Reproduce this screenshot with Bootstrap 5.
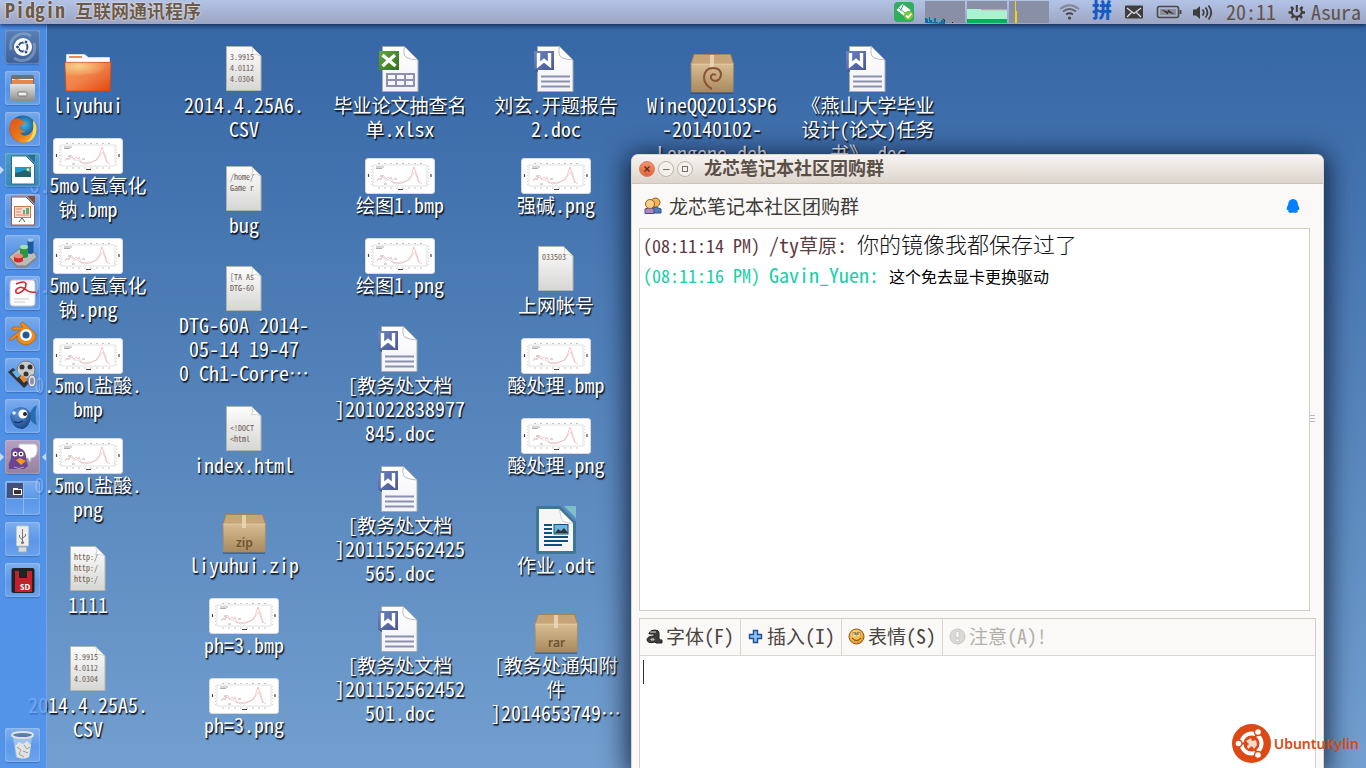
<!DOCTYPE html>
<html lang="zh-CN">
<head>
<meta charset="utf-8">
<meta name="viewport" content="width=device-width, initial-scale=1">
<title>Pidgin 互联网通讯程序</title>
<link href="https://cdn.jsdelivr.net/npm/bootstrap@5.3.0/dist/css/bootstrap.min.css" rel="stylesheet">
<style>
body{font-family:"Noto Sans CJK SC","Liberation Mono",monospace;font-feature-settings:"hwid";font-size:19px;line-height:24px;background:#3465a4;color:#3c3b37}
button,textarea{font-feature-settings:inherit}
.screen{background:linear-gradient(#3465a4,#729fcf);isolation:isolate}
.lat{font-size:20px}
/* top panel */
.panel{height:24px;background:linear-gradient(#b3c3e6,#9da5c2);box-shadow:0 1px 5px rgba(0,10,40,.8);color:#6b5a4c;text-shadow:0 0 2px #f4ece4,0 0 1px #fff;z-index:5;padding:0 5px}
.panel h1{font-size:18px;line-height:20px}
.panel button{color:#5f5348;line-height:22px;font-size:20px}
.panel svg text{text-shadow:none}
.tray{height:24px}
/* launcher */
.launcher{width:47px;background:linear-gradient(rgba(80,148,242,.8),rgba(76,146,240,.8));border-right:1px solid rgba(150,190,245,.45);padding:6px 5px;gap:7px;z-index:3}
.launcher button{width:35px;height:34px;border-radius:3px;background:linear-gradient(rgba(255,255,255,.26),rgba(255,255,255,.05) 55%,rgba(255,255,255,.14));box-shadow:inset 0 0 2px rgba(225,238,255,.8),0 1px 1px rgba(20,60,130,.35)}
.launcher .t-home{background:linear-gradient(#5a7fb4,#3d6098)}
.launcher .t-doc{background:linear-gradient(#4b9cc4,#3a87b8)}
.launcher .t-pidgin{background:linear-gradient(#b6a0c0,#94819f)}
.pip::before,.pip-r::after{content:"";position:absolute;top:13px;border:4px solid transparent}
.pip::before{left:-5px;border-left-color:#c4dcf8;border-right:0}
.pip-r::after{right:-6px;border-right-color:#c4dcf8;border-left:0}
/* desktop */
.desk{display:grid;grid-template-columns:repeat(6,156px);grid-auto-rows:20px;padding:22px 0 0 10px;left:0;right:0;top:24px;z-index:1}
.ico{color:#fff;text-shadow:1px 1px 1px #0a1830,1px 2px 1px rgba(0,0,0,.6);text-align:center;text-decoration:none;white-space:nowrap;line-height:24px}
.ico:hover{color:#fff}
.ico svg{display:block;margin:0 auto -1px}
.ico svg text{text-shadow:none}
.c1{grid-column:1}.c2{grid-column:2}.c3{grid-column:3}.c4{grid-column:4}.c5{grid-column:5}.c6{grid-column:6}
.r1{grid-row:1}.r5{grid-row:5}.r6{grid-row:6}.r7{grid-row:7}.r10{grid-row:10}.r11{grid-row:11}.r12{grid-row:12}.r15{grid-row:15}.r19{grid-row:19}.r20{grid-row:20}.r22{grid-row:22}.r24{grid-row:24}.r26{grid-row:26}.r28{grid-row:28}.r29{grid-row:29}.r31{grid-row:31}.r32{grid-row:32}
/* chat window */
.win{left:631px;right:42px;top:154px;bottom:0;background:#faf9f7;border:1px solid #d9d5cf;border-bottom:0;border-radius:7px 7px 0 0;box-shadow:0 4px 26px 4px rgba(0,8,30,.75);z-index:2}
.wtitle{height:29px;background:linear-gradient(#f7f4f1,#ddd5cc);border-bottom:1px solid #cdc5bb;border-radius:7px 7px 0 0;padding:0 7px;gap:3px;color:#5b5048}
.wtitle h2{font-size:18px;line-height:24px;margin:0 0 4px 8px}
.wtitle button{width:16px;height:16px}
.whead{height:44px;padding:0 22px 0 12px;gap:7px}
.whead h3{font-size:19px;line-height:24px}
.log{border:1px solid #d2cdc3;background:#fff;margin:0 13px 0 7px;padding:0 3px;height:383px}
.log p{line-height:29px;white-space:pre}
.at{font-size:18px}
.who1{color:#5c3a3f}.who2{color:#17cfa6}
.say1{font-size:22px;color:#111;font-weight:300}.say2{font-size:16px;color:#000}
.compose{border:1px solid #d2cdc3;border-bottom:0;margin:7px 7px 0;background:#fff}
.tools{background:#faf9f7;border-bottom:1px solid #dcd8d1;height:37px}
.tools button{font-size:19px;line-height:24px;color:#4a4540;height:36px;width:101px;padding:0 0 2px 6px;gap:3px;border:0;border-right:1px solid #dcd8d1;white-space:nowrap}
.tools button:disabled{color:#b3afaa;width:120px;border:0;font-family:"Noto Sans CJK JP","Noto Sans CJK SC",monospace}
.tools svg{flex:none}
.compose textarea{resize:none;outline:0;font-size:19px}
.cursor{left:3px;top:41px;width:1px;height:24px;background:#333}
.grip{right:8px;top:260px;width:5px;height:7px;border-top:1px solid #bbb;border-bottom:1px solid #bbb}
.grip::before{content:"";position:absolute;left:0;right:0;top:2px;border-top:1px solid #bbb}
.brand{right:7px;bottom:5px;gap:3px;color:#dd4814;font:600 14px/20px "Noto Sans","Open Sans",sans-serif;font-feature-settings:normal;z-index:4}
</style>
</head>
<body>
<svg width="0" height="0" class="position-absolute" aria-hidden="true">
<defs>
<linearGradient id="gPage" x2="0" y2="1"><stop stop-color="#fdfdfd"/><stop offset="1" stop-color="#d6d6d4"/></linearGradient>
<linearGradient id="gDoc" x2="0" y2="1"><stop stop-color="#fff"/><stop offset="1" stop-color="#f2f2f8"/></linearGradient>
<linearGradient id="gW" x2="1" y2="1"><stop stop-color="#6d84c4"/><stop offset="1" stop-color="#475792"/></linearGradient>
<linearGradient id="gX" x2="1" y2="1"><stop stop-color="#63a545"/><stop offset="1" stop-color="#33701c"/></linearGradient>
<linearGradient id="gBox" x2="0" y2="1"><stop stop-color="#d9bd93"/><stop offset="1" stop-color="#a98a5e"/></linearGradient>
<linearGradient id="gFold" x2="1" y2="1"><stop stop-color="#f39a55"/><stop offset=".5" stop-color="#f08148"/><stop offset="1" stop-color="#e4450f"/></linearGradient>
<radialGradient id="gGlow" cx=".3" cy=".2" r=".6"><stop stop-color="#f8d08c"/><stop offset="1" stop-color="#f8d08c" stop-opacity="0"/></radialGradient>
<radialGradient id="gFish" cx=".4" cy=".3" r=".8"><stop stop-color="#5d97da"/><stop offset="1" stop-color="#123e7d"/></radialGradient>
<radialGradient id="gFox" cx=".55" cy=".35" r=".6"><stop stop-color="#39b5e6"/><stop offset="1" stop-color="#12306e"/></radialGradient>
<linearGradient id="gFire" x2="1" y2="1"><stop stop-color="#d9541c"/><stop offset=".6" stop-color="#ee7a1b"/><stop offset="1" stop-color="#fbd33a"/></linearGradient>
<linearGradient id="gGrey" x2="0" y2="1"><stop stop-color="#e4e4e2"/><stop offset="1" stop-color="#8d8d8a"/></linearGradient>
<radialGradient id="gSmile" cx=".4" cy=".3" r=".8"><stop stop-color="#ffe07a"/><stop offset="1" stop-color="#e08a1c"/></radialGradient>
<linearGradient id="gClose" x2="0" y2="1"><stop stop-color="#f39170"/><stop offset="1" stop-color="#e2603a"/></linearGradient>
<symbol id="page" viewBox="0 0 72 48"><path d="M18.500.500h25l9.500 9.500v34.500h-34.500z" fill="url(#gPage)" stroke="#b4b4ae"/><path d="M43.500 .5q3 5 0 8.500q5-2 9.500 1z" fill="#fff" stroke="#c4c4be" stroke-width=".7"/></symbol>
<symbol id="plot" viewBox="0 0 72 48"><rect x="1.500" y="12.500" width="69" height="35" rx="2.500" fill="#fff" stroke="#d7dbe0"/><rect x="9" y="19" width="54" height="21" fill="none" stroke="#ccc" stroke-width=".6"/><path d="M14 17.500h46M14 42h46" stroke="#c4c4c4" stroke-dasharray="2 4"/><path d="M7.500 20v20M64.500 20v20" stroke="#ccc" stroke-width=".8" stroke-dasharray="1 2"/><path d="M4.500 28v3M67 28v3M34 43.500h5" stroke="#444" stroke-width="1.200"/><path d="M12 21h8M12 22.500h6M16 30h3M20 38h3M30 33h3" stroke="#999" stroke-width=".8"/><path d="M13 35l2-3 2 2 2-5 3 4 2-2 2 2 1-2 2 5 3 2 6-1 6-3 3-4 3-9 3 8 2 7 3 2" fill="none" stroke="#f0b9be" stroke-width=".8"/><path d="M13 34l3-1 3-2 3 3 4 0 3 3 10-1 6-2 4-6 2-2 2 6 2 5" fill="none" stroke="#d5bcc0" stroke-width=".6"/></symbol>
<symbol id="word" viewBox="0 0 72 48"><path d="M17.500.500h22l13.500 13.500v31.500h-35.500z" fill="url(#gDoc)" stroke="#a9aab0"/><path d="M39.500.500q-2 8 2 11q4 2 11.500 2.500z" fill="#fff" stroke="#a5a7b2" stroke-width=".8"/><path d="M21 30.500h29M21 35.500h29M21 40.500h29" stroke="#8c92ad" stroke-width="2"/><path d="M15 24h3v2z" fill="#3150a8"/><rect x="14" y="5" width="20" height="19" fill="url(#gW)"/><path d="M18.500 7v12l5.500-4.500 5.500 4.500v-12" fill="none" stroke="#fff" stroke-width="3.400"/></symbol>
<symbol id="box" viewBox="0 0 72 48"><path d="M15 46h42v2h-42z" fill="#1c3c68" opacity=".5"/><path d="M18 8.500h36.500l3 9.500h-42.500z" fill="#c7a578" stroke="#a4845a"/><path d="M15 17.500h42.500l-.5 28.500h-41.500z" fill="url(#gBox)" stroke="#a98b60" stroke-width=".8"/><path d="M15.500 18h41.500" stroke="#ead2ac"/><path d="M34 9h4v13h-4z" fill="#ead8b8" opacity=".85"/></symbol>
</defs>
</svg>
<div class="screen position-relative vh-100 overflow-hidden d-flex flex-column">
<header class="panel d-flex align-items-center justify-content-between position-relative flex-shrink-0">
  <h1 class="mb-1 fw-bold"><span class="lat">Pidgin </span>互联网通讯程序</h1>
  <div class="tray d-flex align-items-center">
    <svg width="332" height="24" viewBox="0 0 332 24" aria-hidden="true">
      <rect x="0" y="2" width="20" height="20" rx="4" fill="#2fae5c"/><path d="M2.500 10l6-6 8 6-5 7z" fill="#fff"/><path d="M5 8l7 6M9.500 4.500l-3 6" stroke="#2fae5c" stroke-width="1"/><circle cx="14.500" cy="15.500" r="4.500" fill="#7cc23a"/><path d="M12 15.500l2 2 3.500-4" stroke="#fff" stroke-width="1.800" fill="none"/>
      <g fill="#898fa4"><rect x="31" y="1" width="40" height="22"/><rect x="73" y="1" width="40" height="22"/><rect x="115" y="1" width="40" height="22"/></g>
      <path d="M31 23v-5h2v1h1v3h1v-5h1v3h2v2h2v-4h2v4h2v1h1v-1h2v-2h2v1h2v3z" fill="#0c6fae"/><path d="M48 18l3 2v2zM58 22h1v1h-1z" fill="#10202e"/>
      <path d="M73 9h14v1h26v9h-40z" fill="#a9f3d2"/><path d="M87 10h26" stroke="#d4bfc0"/><path d="M73 19h40v4h-40z" fill="#04b058"/><path d="M121 1h1v10h1v12h-2z" fill="#f5d400"/>
      <g fill="none" stroke="#4b4845" stroke-width="1.800"><path d="M169 11.500q6.500-5 13 0" opacity=".75"/><path d="M166 9q9.500-7.500 19 0" opacity=".45"/><path d="M172 14.500q3.500-2.500 7 0"/></g><circle cx="175.500" cy="18" r="1.600" fill="#4b4845"/>
      <text x="198" y="18" font-size="20" font-weight="900" fill="#155bc4">拼</text>
      <rect x="231" y="5.500" width="18" height="13" rx="1" fill="#3f3d3b"/><path d="M233 8l7 5.500 7-5.500M233 17l4.500-4.500M247 17l-4.500-4.500" fill="none" stroke="#dfe3ee" stroke-width="1.200"/>
      <rect x="263.500" y="6.500" width="21" height="11" rx="2" fill="none" stroke="#4b4845" stroke-width="1.600"/><rect x="266" y="9" width="16" height="6" fill="#8d8f9a"/><path d="M286.500 10v4" stroke="#4b4845" stroke-width="2"/><path d="M267 9.500l7 2 0-2 7 5-7-2v2z" fill="#3a3836"/>
      <path d="M299 9.500h3l4-3.500v13l-4-3.500h-3z" fill="#3f3d3b"/><g fill="none" stroke="#3f3d3b" stroke-width="1.700"><path d="M308.500 9.500q2.500 3 0 6"/><path d="M311.500 7.500q4 5 0 10"/><path d="M314.500 5.500q5.500 7 0 14"/></g>
    </svg>
    <button class="btn btn-link border-0 p-0 text-decoration-none">20:11</button>
    <button class="btn btn-link border-0 p-0 text-decoration-none d-flex align-items-center ms-2"><svg width="27" height="20" viewBox="0 0 27 20" aria-hidden="true"><g stroke="#3f3d3b" fill="none"><path d="M9.500 6a5 5 0 1 0 6.500 0M12.800 3v7" stroke-width="2"/><path d="M4.500 10.500h3.500M17.500 10.500h3.500M7 4.800l2 2M18.600 4.800l-2 2M7.500 15.800l2-2M18 15.800l-2-2M12.800 15v3.500" stroke-width="2.400"/></g></svg>Asura</button>
  </div>
</header>
<nav class="launcher d-flex flex-column align-items-start flex-grow-1 position-relative" aria-label="启动器">
  <button class="btn border-0 p-0 d-flex t-home" aria-label="Dash"><svg width="35" height="34"><path d="M6 20a13 13 0 0 1 20-14M29 13a13 13 0 0 1-20 15" fill="none" stroke="#a9bfda" stroke-width="3" opacity=".45"/><circle cx="18" cy="17" r="9" fill="#fff"/><circle cx="18" cy="17" r="4.500" fill="none" stroke="#2c4f86" stroke-width="2"/><g fill="#2c4f86" stroke="#fff"><circle cx="12.500" cy="17" r="2"/><circle cx="21" cy="12" r="2"/><circle cx="21" cy="22" r="2"/></g></svg></button>
  <button class="btn border-0 p-0 d-flex" aria-label="文件"><svg width="35" height="34"><path d="M6 6q0-2 2-2h19q2 0 2 2v8h-23z" fill="#71716e"/><path d="M7 8h21v6h-21z" fill="#f5efe4"/><path d="M7 9l5-1 4 1h12v5h-21z" fill="#e88747"/><rect x="5" y="13" width="25" height="17" rx="1" fill="url(#gGrey)"/><rect x="13" y="21" width="9" height="4" rx="1" fill="#eee" stroke="#777"/></svg></button>
  <button class="btn border-0 p-0 d-flex" aria-label="Firefox"><svg width="35" height="34"><circle cx="18" cy="17" r="13.500" fill="url(#gFox)"/><path d="M6 9q-4 9 1 16 7 8 16 5 9-4 8.500-15-1-4-3-6 1 8-2 11-4 5-9 3l-3-3q3 2 6-1-4 0-6-3 0-3 3-3l4-3q-4 0-5-2l-2-1q-3-2-8.500 2z" fill="url(#gFire)"/><path d="M28 8q5 6 3 13-3 8-9 9 8-6 6-22z" fill="#fbdc4c"/></svg></button>
  <button class="btn border-0 p-0 d-flex t-doc position-relative pip" aria-label="Writer"><svg width="35" height="34"><path d="M22 2h8v8z" fill="#2a6f92"/><path d="M6.500 3h14.500l8.500 8.500v19.500h-23z" fill="#fff" stroke="#2e6d8c"/><rect x="10" y="14" width="16" height="10" fill="#1d9ad6"/><path d="M10 24v-4l5-1 5-2 6 3v4z" fill="#28606b"/><circle cx="23" cy="16.500" r="1.500" fill="#fbd94b"/></svg></button>
  <button class="btn border-0 p-0 d-flex" aria-label="Impress"><svg width="35" height="34"><path d="M22 2h8v8z" fill="#8c4a30"/><path d="M6.500 3h14.500l8.500 8.500v19.500h-23z" fill="#fff" stroke="#9a5a42"/><rect x="9.500" y="12.500" width="16" height="11" fill="#f7ded2" stroke="#d4704c"/><path d="M11 15h6M11 18h5M11 21h13" stroke="#d98564"/><path d="M18 20v-4h2v4M21 20v-6h3v6" fill="#65a67a"/><path d="M14 28l3-4 3 4" stroke="#555" fill="none"/></svg></button>
  <button class="btn border-0 p-0 d-flex" aria-label="统计"><svg width="35" height="34"><path d="M4 22l10-8h13l5 8-11 9h-9z" fill="#b9bcbb" stroke="#74797c"/><path d="M4 22l8 9h9l11-9v2l-11 9h-9l-8-9z" fill="#85898b"/><path d="M22.500 5v13q3 2 6 0v-13z" fill="#1c5a9e"/><ellipse cx="25.500" cy="5" rx="3" ry="1.800" fill="#9cc6ee"/><path d="M15 12v10q4 2 8 0v-10z" fill="#2b9440"/><ellipse cx="19" cy="12" rx="4" ry="2.200" fill="#a5dfae"/><path d="M9 21v5q4.500 3 9 0v-5z" fill="#d42a2a"/><ellipse cx="13.500" cy="21" rx="4.500" ry="2.200" fill="#f58a80"/></svg></button>
  <button class="btn border-0 p-0 d-flex" aria-label="文档"><svg width="35" height="34"><rect x="5" y="4" width="25" height="26" rx="3" fill="#fbfbfb" stroke="#c6cad0"/><path d="M11 8q9-4 10 0 0 6-7 9-4 1-3-3 4-5 9-1 4 4 11 3" fill="none" stroke="#d9252c" stroke-width="1.600"/><path d="M9 23h15M9 26h11" stroke="#ccc"/></svg></button>
  <button class="btn border-0 p-0 d-flex" aria-label="Blender"><svg width="35" height="34"><path d="M4 22l12-9h-9q-1-3 2-3h9l-3-3q2-3 4-1l10 9q4 5 0 9-8 8-16 0-2-3-1-5l-5 4q-3 1-3-1z" fill="#f08a1c" stroke="#b35e08" stroke-width=".7"/><circle cx="21" cy="18" r="6" fill="#fff"/><circle cx="21" cy="18" r="3.500" fill="#1d5b9a"/></svg></button>
  <button class="btn border-0 p-0 d-flex" aria-label="视频编辑"><svg width="35" height="34"><circle cx="21" cy="12" r="9" fill="#c9cccb" stroke="#777"/><g fill="#333"><circle cx="17" cy="9" r="2.500"/><circle cx="25" cy="9" r="2.500"/><circle cx="21" cy="16" r="2.500"/></g><path d="M3 14l5-4 16 15-5 5z" fill="#2f3336"/><path d="M7 14l4-2 5 5-4 3z" fill="#5fb4ee"/><path d="M14 19l4-2 4 5-3 3z" fill="#e58b35"/><ellipse cx="27" cy="23" rx="4" ry="6" fill="#dfe2e8" stroke="#6a7080"/><ellipse cx="27" cy="23" rx="2" ry="3.500" fill="#8a93b0"/></svg></button>
  <button class="btn border-0 p-0 d-flex" aria-label="Bluefish"><svg width="35" height="34"><path d="M24 17q2-8 8-11-3 10 0 20-6-2-8-9z" fill="#2a6cae"/><path d="M5 18q2-10 11-10 9 1 10 10-1 9-8 12-10 1-13-12z" fill="url(#gFish)"/><circle cx="18" cy="15" r="4.500" fill="#fff"/><circle cx="20" cy="15" r="2" fill="#222"/><circle cx="9" cy="14" r="1.800" fill="#e8f0fa"/><path d="M9 23q5 2 9-1" stroke="#0b2a5a" fill="none"/></svg></button>
  <button class="btn border-0 p-0 d-flex t-pidgin position-relative pip pip-r" aria-label="Pidgin"><svg width="35" height="34"><path d="M14 4h16q3 1 2 8-1 6-6 6l-1 4-2-4h-9z" fill="#fff" stroke="#b9c2d6"/><path d="M6 12q1-5 8-4 6 1 7 8 0 5 2 10l-4 3h-15q-1-6 2-10z" fill="#6b4590"/><circle cx="10" cy="14" r="2.500" fill="#fff"/><circle cx="16" cy="14" r="2.500" fill="#fff"/><circle cx="10.500" cy="14" r="1"/><circle cx="16" cy="14" r="1"/><path d="M11 20l4-2 6 3-5 4z" fill="#f49b1e"/><path d="M9 27q5 3 10 0" stroke="#b69acb" fill="none"/></svg></button>
  <button class="btn border-0 p-0 d-flex" aria-label="工作区"><svg width="35" height="34"><rect x="2" y="2" width="16" height="15" fill="#45507c"/><rect x="8.500" y="8.500" width="8" height="5" fill="#333" stroke="#fff"/><path d="M8 8h5" stroke="#fff" stroke-width="2"/><path d="M18.500 2v31M2 17.500h31" stroke="#8fbaf0"/></svg></button>
  <button class="btn border-0 p-0 d-flex" aria-label="USB"><svg width="35" height="34"><rect x="11.500" y="4" width="12" height="20" rx="1" fill="#eceeef" stroke="#c3c6c9"/><rect x="13.500" y="25" width="8" height="5" fill="#d9dbdc" stroke="#a7a9ab"/><path d="M17.500 7v14M17.500 18l-3-3v-2M17.500 16l3-2v-2" stroke="#777" fill="none"/><circle cx="17.500" cy="20.500" r="1.500" fill="#777"/></svg></button>
  <button class="btn border-0 p-0 d-flex" aria-label="SD"><svg width="35" height="34"><rect x="6.500" y="5" width="23" height="25" rx="2" fill="#232323"/><path d="M10 8h17v21h-17z" fill="#c8202a"/><path d="M14 8h8v7h-8z" fill="#222"/><text x="15" y="27" font-family="Noto Sans" font-size="8" font-weight="700" fill="#fff">SD</text></svg></button>
  <button class="btn border-0 p-0 d-flex mt-auto" aria-label="回收站"><svg width="35" height="34"><path d="M8 9l3 20q6 3 13 0l3-20z" fill="#e6ecf0" opacity=".45"/><path d="M10 18l4-4 4 2 4-3 4 4-2 12q-6 3-12 0z" fill="#e2e2de"/><path d="M12 19l4 3-2 4 5 3M19 17l3 4 3-2M18 23l5 2" stroke="#9b9d9c" fill="none"/><ellipse cx="17.500" cy="7" rx="10.500" ry="3" fill="#587da8" stroke="#dfe2e2" stroke-width="2"/></svg></button>
</nav>
<main class="desk position-absolute">
  <a href="#" class="ico c1 r1"><svg width="72" height="48" viewBox="0 0 72 48"><path d="M14.500 16v-7.500h18l4 3h21v5z" fill="#fafafa" stroke="#d8d8d8"/><path d="M17 11h13" stroke="#ef8a55" stroke-width="2"/><path d="M13 16.500h46l-1 28.500h-44z" fill="url(#gFold)" stroke="#d4480f" stroke-width=".8"/><path d="M13 16.500h46l-1 10q-25 0-44 8z" fill="url(#gGlow)"/></svg><span class="lat">liyuhui</span></a>
  <a href="#" class="ico c1 r5"><svg width="72" height="48"><use href="#plot"/></svg><span class="lat">0.5mol</span>氢氧化<br>钠<span class="lat">.bmp</span></a>
  <a href="#" class="ico c1 r10"><svg width="72" height="48"><use href="#plot"/></svg><span class="lat">0.5mol</span>氢氧化<br>钠<span class="lat">.png</span></a>
  <a href="#" class="ico c1 r15"><svg width="72" height="48"><use href="#plot"/></svg><span class="lat">0.5mol</span>盐酸.<br><span class="lat">bmp</span></a>
  <a href="#" class="ico c1 r20"><svg width="72" height="48"><use href="#plot"/></svg><span class="lat">0.5mol</span>盐酸.<br><span class="lat">png</span></a>
  <a href="#" class="ico c1 r26"><svg width="72" height="48"><use href="#page"/><g fill="#6e5a44" font-size="8"><text x="22" y="14">http:/</text><text x="22" y="25">http:/</text><text x="22" y="36">http:/</text></g></svg><span class="lat">1111</span></a>
  <a href="#" class="ico c1 r31"><svg width="72" height="48"><use href="#page"/><g fill="#6e5a54" font-size="8"><text x="22" y="14">3.9915</text><text x="22" y="25">4.0112</text><text x="22" y="36">4.0304</text></g></svg><span class="lat">2014.4.25A5.<br>CSV</span></a>

  <a href="#" class="ico c2 r1"><svg width="72" height="48"><use href="#page"/><g fill="#6e5a54" font-size="8"><text x="22" y="14">3.9915</text><text x="22" y="25">4.0112</text><text x="22" y="36">4.0304</text></g></svg><span class="lat">2014.4.25A6.<br>CSV</span></a>
  <a href="#" class="ico c2 r7"><svg width="72" height="48"><use href="#page"/><g fill="#6e5a54" font-size="8"><text x="22" y="14">/home/</text><text x="22" y="25">Game r</text></g></svg><span class="lat">bug</span></a>
  <a href="#" class="ico c2 r12"><svg width="72" height="48"><use href="#page"/><g fill="#6e5a54" font-size="8"><text x="22" y="14">[TA As</text><text x="22" y="25">DTG-60</text></g></svg><span class="lat">DTG-60A 2014-<br>05-14 19-47<br>0 Ch1-Corre…</span></a>
  <a href="#" class="ico c2 r19"><svg width="72" height="48"><use href="#page"/><g fill="#6e5a54" font-size="8"><text x="22" y="25">&lt;!DOCT</text><text x="22" y="36">&lt;html</text></g></svg><span class="lat">index.html</span></a>
  <a href="#" class="ico c2 r24"><svg width="72" height="48"><use href="#box"/><text x="28" y="41" font-family="Noto Sans" font-weight="600" font-size="12" fill="#6d522f">zip</text></svg><span class="lat">liyuhui.zip</span></a>
  <a href="#" class="ico c2 r28"><svg width="72" height="48"><use href="#plot"/></svg><span class="lat">ph=3.bmp</span></a>
  <a href="#" class="ico c2 r32"><svg width="72" height="48"><use href="#plot"/></svg><span class="lat">ph=3.png</span></a>

  <a href="#" class="ico c3 r1"><svg width="72" height="48" viewBox="0 0 72 48"><path d="M18.500.500h22l13.500 13.500v31.500h-35.500z" fill="url(#gDoc)" stroke="#a9aab0"/><path d="M40.500.500q-2 8 2 11q4 2 11.500 2.500z" fill="#fff" stroke="#a5a7b2" stroke-width=".8"/><path d="M23 28h27v12h-27zM23 34h27M32 28v12M41 28v12" stroke="#8c92ad" stroke-width="2" fill="none"/><rect x="15" y="5" width="20" height="19" fill="url(#gX)"/><path d="M18.500 9l13 11M31 9l-12.500 11" stroke="#fff" stroke-width="3.400"/></svg>毕业论文抽查名<br>单<span class="lat">.xlsx</span></a>
  <a href="#" class="ico c3 r6"><svg width="72" height="48"><use href="#plot"/></svg>绘图<span class="lat">1.bmp</span></a>
  <a href="#" class="ico c3 r10"><svg width="72" height="48"><use href="#plot"/></svg>绘图<span class="lat">1.png</span></a>
  <a href="#" class="ico c3 r15"><svg width="72" height="48"><use href="#word"/></svg>[教务处文档<br><span class="lat">]201022838977<br>845.doc</span></a>
  <a href="#" class="ico c3 r22"><svg width="72" height="48"><use href="#word"/></svg>[教务处文档<br><span class="lat">]201152562425<br>565.doc</span></a>
  <a href="#" class="ico c3 r29"><svg width="72" height="48"><use href="#word"/></svg>[教务处文档<br><span class="lat">]201152562452<br>501.doc</span></a>

  <a href="#" class="ico c4 r1"><svg width="72" height="48"><use href="#word"/></svg>刘玄.开题报告<br><span class="lat">2.doc</span></a>
  <a href="#" class="ico c4 r6"><svg width="72" height="48"><use href="#plot"/></svg>强碱<span class="lat">.png</span></a>
  <a href="#" class="ico c4 r11"><svg width="72" height="48"><use href="#page"/><text x="22" y="14" fill="#6e5a44" font-size="8">033503</text></svg>上网帐号</a>
  <a href="#" class="ico c4 r15"><svg width="72" height="48"><use href="#plot"/></svg>酸处理<span class="lat">.bmp</span></a>
  <a href="#" class="ico c4 r19"><svg width="72" height="48"><use href="#plot"/></svg>酸处理<span class="lat">.png</span></a>
  <a href="#" class="ico c4 r24"><svg width="72" height="48" viewBox="0 0 72 48"><path d="M18 0h22l16 16v30q0 2-2 2h-36q-2 0-2-2v-44q0-2 2-2z" fill="#3c7796"/><path d="M44 0h12v12z" fill="#7cc0cc"/><path d="M19 3h20l14 14v28h-34z" fill="#f6f6f6"/><path d="M39 3v0l14 14q-9 0-11-3z" fill="#fff" stroke="#bbb" stroke-width=".7"/><path d="M24 19h8M24 23h8M24 27h8M24 31h24M24 35h24M24 39h18" stroke="#0e4f7c" stroke-width="1.800"/><rect x="34" y="18.500" width="14" height="9.500" fill="#6bb7e4" stroke="#0e4f7c"/><path d="M35 27l3-4 3 2 3-3 4 5z" fill="#333"/></svg>作业<span class="lat">.odt</span></a>
  <a href="#" class="ico c4 r29"><svg width="72" height="48"><use href="#box"/><text x="28" y="41" font-family="Noto Sans" font-weight="600" font-size="12" fill="#6d522f">rar</text></svg>[教务处通知附<br>件<br><span class="lat">]2014653749…</span></a>

  <a href="#" class="ico c5 r1"><svg width="72" height="48"><use href="#box"/><path d="M36 43q-8-4-8-12 1-9 9-9 8 0 8 7-1 6-6 6-5-1-4-5 2-3 5-1" fill="none" stroke="#8a5238" stroke-width="2"/></svg><span class="lat">WineQQ2013SP6<br>-20140102-<br>Longene.deb</span></a>
  <a href="#" class="ico c6 r1"><svg width="72" height="48"><use href="#word"/></svg>《燕山大学毕业<br>设计(论文)任务<br>书》.doc</a>
</main>
<section class="win position-absolute d-flex flex-column" aria-label="聊天窗口">
  <div class="wtitle d-flex align-items-center flex-shrink-0">
    <button class="btn border-0 p-0 d-flex" aria-label="关闭"><svg width="16" height="16"><circle cx="8" cy="8" r="7.500" fill="url(#gClose)" stroke="#d9805f"/><path d="M5.500 5.500l5 5M10.500 5.500l-5 5" stroke="#5b2a18" stroke-width="1.400"/></svg></button>
    <button class="btn border-0 p-0 d-flex" aria-label="最小化"><svg width="16" height="16"><circle cx="8" cy="8" r="7.500" fill="#f4f1ed" stroke="#bcb4aa"/><path d="M5 8.500h6.500" stroke="#77706a"/></svg></button>
    <button class="btn border-0 p-0 d-flex" aria-label="最大化"><svg width="16" height="16"><circle cx="8" cy="8" r="7.500" fill="#f4f1ed" stroke="#bcb4aa"/><rect x="5.500" y="5.500" width="5" height="5" fill="none" stroke="#77706a"/></svg></button>
    <h2 class="fw-bold">龙芯笔记本社区团购群</h2>
  </div>
  <div class="whead d-flex align-items-center flex-shrink-0">
    <svg width="18" height="18" aria-hidden="true"><path d="M8 11q4-2 9 1v4h-8z" fill="#4e7fc4" stroke="#2c4f8a"/><circle cx="11.500" cy="5.500" r="4.500" fill="#efb25c" stroke="#9a5a1c"/><path d="M1 12q4-3 9 0v4.500h-9z" fill="#a78ac4" stroke="#5c4478"/><circle cx="6" cy="7" r="4.500" fill="#f9d08a" stroke="#9a5a1c"/></svg>
    <h3 class="mb-0 fw-normal flex-grow-1">龙芯笔记本社区团购群</h3>
    <svg width="16" height="18" aria-hidden="true"><path d="M8 2q4.500 0 5 6 2 3 1 5l-1.500 0q1 1.500-.5 2.500-2 .5-4 0-2 .5-4 0-1.500-1-.5-2.500l-1.500 0q-1-2 1-5 .5-6 5-6z" fill="#007fff"/></svg>
  </div>
  <div class="log flex-shrink-0">
    <p class="m-0"><span class="who1"><span class="at">(08:11:14 PM) </span><span class="lat">/ty</span>草原<span class="lat">: </span></span><span class="say1">你的镜像我都保存过了</span></p>
    <p class="m-0"><span class="who2"><span class="at">(08:11:16 PM) </span><span class="lat">Gavin_Yuen: </span></span><span class="say2">这个免去显卡更换驱动</span></p>
  </div>
  <div class="compose d-flex flex-column flex-grow-1 position-relative">
    <div class="tools d-flex align-items-center flex-shrink-0">
      <button class="btn rounded-0 d-flex align-items-center"><svg width="17" height="16"><path d="M3 5q1-3 6-3 4 0 4 3v6q1 1 3 1v3h-6l-1-1q-7 2-8-2 0-4 7-4v-2h-5z" fill="#3d3d3d" stroke="#222"/><path d="M5 11h3v1h-3zM4 4h6" stroke="#ddd"/></svg><span>字体<span class="lat">(F)</span></span></button>
      <button class="btn rounded-0 d-flex align-items-center"><svg width="17" height="16"><path d="M6.500 2.500h4v4h4v4h-4v4h-4v-4h-4v-4h4z" fill="#8fc0f2" stroke="#1f4f94" stroke-width="1.400"/></svg><span>插入<span class="lat">(I)</span></span></button>
      <button class="btn rounded-0 d-flex align-items-center"><svg width="17" height="17"><circle cx="8.500" cy="8.500" r="7.500" fill="url(#gSmile)" stroke="#8a5510"/><path d="M5 7.500v-3h3v3M9 7.500v-3h3v3" fill="#fff" stroke="#8a5510" stroke-width=".6"/><path d="M7 5v2M10 5v2" stroke="#333"/><path d="M4 10q4.500 5 9 0" fill="none" stroke="#7a3c08"/></svg><span>表情<span class="lat">(S)</span></span></button>
      <button class="btn rounded-0 d-flex align-items-center opacity-100" disabled><svg width="17" height="17"><circle cx="8.500" cy="8.500" r="7.500" fill="#dcdad7" stroke="#c8c5c1"/><path d="M7 3.500h3v6h-3zM7 11h3v2.500h-3z" fill="#fff" stroke="#c0bdb9" stroke-width=".6"/></svg><span>注意<span class="lat">(A)</span>！</span></button>
    </div>
    <textarea class="form-control flex-grow-1 border-0 rounded-0 shadow-none p-1" aria-label="消息"></textarea>
    <span class="cursor position-absolute"></span>
  </div>
  <span class="grip position-absolute"></span>
</section>
<div class="brand position-absolute d-flex align-items-center">
  <svg width="39" height="39" aria-hidden="true"><circle cx="19.500" cy="19.500" r="19.500" fill="#dd4814"/><circle cx="19.500" cy="19.500" r="10" fill="none" stroke="#fff" stroke-width="4"/><path d="M19.500 19.500l8-14M19.500 19.500h-17M19.500 19.500l8 14" stroke="#dd4814" stroke-width="2"/><g fill="#fff" stroke="#dd4814" stroke-width="1.400"><circle cx="6.500" cy="19.500" r="3.500"/><circle cx="26" cy="8" r="3.500"/><circle cx="26" cy="31" r="3.500"/></g><circle cx="19.500" cy="19.500" r="7" fill="#dd4814"/><path d="M14 17l5-3 1 3 4-1 1 5-3 4-2-3-4 3-1-3 2-2z" fill="#f7d9cc"/></svg>
  <span>UbuntuKylin</span>
</div>
</div>
<script src="https://cdn.jsdelivr.net/npm/bootstrap@5.3.0/dist/js/bootstrap.bundle.min.js"></script>
</body>
</html>
